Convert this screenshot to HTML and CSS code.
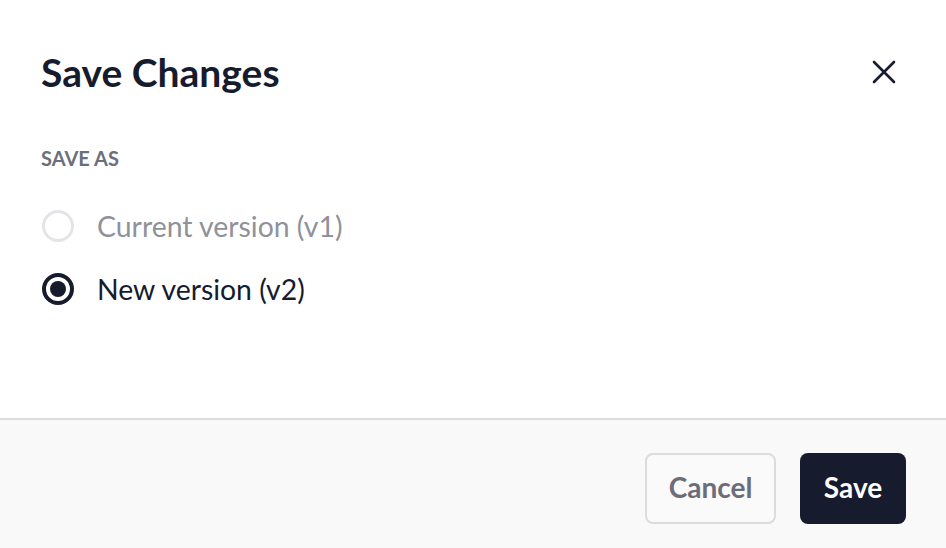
FILE: index.html
```html
<!DOCTYPE html>
<html lang="en">
<head>
<meta charset="utf-8">
<title>Save Changes</title>
<link rel="stylesheet" href="styles.css">
</head>
<body>
<div class="dialog">
  <div class="body">
    <div class="header">
      <h1 class="title">Save Changes</h1>
      <button class="close" aria-label="Close">
        <svg width="24" height="24" viewBox="0 0 24 24"><path d="M2 2 L22 22 M22 2 L2 22" stroke="#161b2d" stroke-width="2.6" stroke-linecap="round" fill="none"/></svg>
      </button>
    </div>
    <div class="label">SAVE AS</div>
    <div class="options">
      <label class="option disabled"><span class="radio"></span><span class="text">Current version (v1)</span></label>
      <label class="option checked"><span class="radio"></span><span class="text">New version (v2)</span></label>
    </div>
  </div>
  <div class="footer">
    <button class="btn btn-cancel">Cancel</button>
    <button class="btn btn-save">Save</button>
  </div>
</div>
</body>
</html>
```
FILE: styles.css
```css
html, body {
  margin: 0;
  padding: 0;
  background: #ffffff;
}
body {
  font-family: Lato, "Open Sans", sans-serif;
  color: #161b2d;
}
.dialog {
  width: 946px;
  height: 548px;
  display: flex;
  flex-direction: column;
}
.body {
  flex: 1;
  padding: 0 40px 0 41px;
}
.header {
  display: flex;
  align-items: center;
  justify-content: space-between;
  height: 44px;
  margin-top: 50px;
}
.title {
  margin: 0;
  font-size: 39px;
  font-weight: 700;
  line-height: 44px;
  color: #161b2d;
}
.close {
  width: 44px;
  height: 44px;
  border: 0;
  background: transparent;
  padding: 0;
  display: flex;
  align-items: center;
  justify-content: center;
}
.label {
  margin-top: 52px;
  font-size: 20px;
  font-weight: 700;
  line-height: 24px;
  color: #6b6f7d;
}
.options {
  margin-top: 40px;
  display: flex;
  flex-direction: column;
  gap: 31px;
}
.option {
  display: flex;
  align-items: center;
  gap: 23px;
  height: 32px;
}
.radio {
  box-sizing: border-box;
  width: 32px;
  height: 32px;
  border-radius: 50%;
  border: 3px solid #e4e4e8;
  display: flex;
  align-items: center;
  justify-content: center;
  margin-left: 1px;
}
.option.checked .radio {
  border: 4px solid #161b2d;
}
.option.checked .radio::after {
  content: "";
  width: 16px;
  height: 16px;
  border-radius: 50%;
  background: #161b2d;
}
.text {
  font-size: 28.4px;
  line-height: 32px;
}
.option.disabled .text {
  color: #8f919b;
}
.footer {
  height: 130px;
  border-top: 2px solid #dddde1;
  background: #f9f9f9;
  display: flex;
  justify-content: flex-end;
  align-items: flex-start;
  gap: 24px;
  padding: 33px 40px 0 0;
  box-sizing: border-box;
}
.btn {
  font-family: Lato, "Open Sans", sans-serif;
  font-weight: 700;
  font-size: 28px;
  height: 71px;
  border-radius: 8px;
  padding: 0 0 3px 0;
  box-sizing: border-box;
}
.btn-cancel {
  width: 131px;
  background: #fafafa;
  border: 2px solid #dcdce0;
  color: #6b6e7a;
}
.btn-save {
  width: 106px;
  background: #161b2d;
  border: 0;
  color: #ffffff;
}
```
